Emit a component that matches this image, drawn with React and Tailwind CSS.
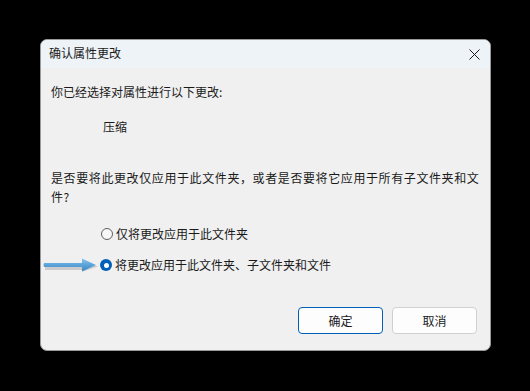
import React from "react";

const font = { fontFamily: '"Noto Sans CJK SC", "Noto Sans", sans-serif' };

const Radio = ({ checked, label }) => (
  <div className="flex items-center h-[16px]">
    {checked ? (
      <span className="w-[12px] h-[12px] rounded-full bg-[#005fb8] flex items-center justify-center">
        <span className="w-[5px] h-[5px] rounded-full bg-white" />
      </span>
    ) : (
      <span className="w-[12px] h-[12px] rounded-full border border-[#5f5f5f] bg-[#f7f7f7]" />
    )}
    <span className="ml-[3px] text-[12px] leading-[16px] text-[#1a1a1a]">{label}</span>
  </div>
);

const Arrow = () => (
  <svg width="56" height="16" viewBox="0 0 56 16" className="block">
    <defs>
      <linearGradient id="ag" x1="0" y1="0" x2="0" y2="1">
        <stop offset="0" stopColor="#8cc4ea" />
        <stop offset="0.5" stopColor="#5aa3da" />
        <stop offset="1" stopColor="#3f86c2" />
      </linearGradient>
    </defs>
    <path d="M2 10 H40 V4.5 L55 9.5 L40 14.5 V13 H2 Z" fill="#000" opacity="0.15" />
    <path d="M1 6 H39 V1.5 L53 8 L39 14.5 V10 H1 Q0 8 1 6 Z" fill="url(#ag)" />
  </svg>
);

export default function App() {
  return (
    <div className="w-[530px] h-[391px] bg-black pt-[39px] pl-[40px]" style={font}>
      <div className="w-[451px] h-[312px] bg-[#f0f0f0] border border-[#9a9a9a] rounded-[7px] overflow-hidden flex flex-col">
        <div className="h-[28px] bg-[#eef3f8] flex items-center justify-between pl-[8px] pr-[10px] shrink-0">
          <span className="text-[12px] text-[#1a1a1a] -mt-[2px]">确认属性更改</span>
          <svg width="11" height="11" viewBox="0 0 11 11">
            <path d="M0.5 0.5 L10.5 10.5 M10.5 0.5 L0.5 10.5" stroke="#1a1a1a" strokeWidth="1" />
          </svg>
        </div>
        <div className="flex-1 flex flex-col pl-[10px] pr-[10px] text-[12px] leading-[16px] text-[#1a1a1a]">
          <div className="mt-[16px]">你已经选择对属性进行以下更改:</div>
          <div className="mt-[19px] pl-[52px]">压缩</div>
          <div className="mt-[33px] leading-[19px] tracking-[0.6px]">
            是否要将此更改仅应用于此文件夹，或者是否要将它应用于所有子文件夹和文
            <br />
            件?
          </div>
          <div className="mt-[20px] pl-[50px]">
            <Radio label="仅将更改应用于此文件夹" />
          </div>
          <div className="mt-[15px] flex items-center -ml-[8px]">
            <Arrow />
            <div className="ml-[1px]">
              <Radio checked label="将更改应用于此文件夹、子文件夹和文件" />
            </div>
          </div>
          <div className="mt-auto mb-[16px] flex justify-end gap-[9px] pr-[3px]">
            <button className="w-[85px] h-[27px] bg-[#fdfdfd] border border-[#005fb8] rounded-[4px] text-[12px] text-[#1a1a1a]">
              确定
            </button>
            <button className="w-[85px] h-[27px] bg-[#fdfdfd] border border-[#d0d0d0] rounded-[4px] text-[12px] text-[#1a1a1a]">
              取消
            </button>
          </div>
        </div>
      </div>
    </div>
  );
}
